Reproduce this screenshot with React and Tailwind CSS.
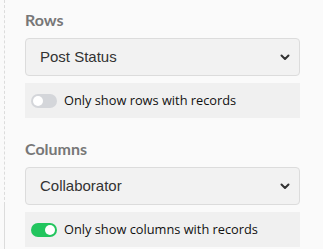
export default function App() {
  const Chevron = () => (
    <svg width="12" height="12" viewBox="0 0 12 12" className="shrink-0">
      <path d="M2.5 4.5 L6 8 L9.5 4.5" fill="none" stroke="#333" strokeWidth="2" strokeLinecap="round" strokeLinejoin="round" />
    </svg>
  );
  const Toggle = ({ on }) => (
    <div className={`w-[26px] h-[14px] rounded-full flex items-center px-[2px] ${on ? "bg-[#22c55e] justify-end" : "bg-[#d4d6da] justify-start"}`}>
      <div className="w-[10px] h-[10px] rounded-full bg-white" />
    </div>
  );
  const Section = ({ label, value, toggleText, on }) => (
    <div className="flex flex-col">
      <div className="text-[16px] leading-[20px] font-bold text-[#777] font-['Lato',sans-serif] h-[20px]">{label}</div>
      <div className="mt-[8px] h-[38px] bg-[#f2f2f2] border border-[#dcdcdc] rounded-[4px] flex items-center justify-between pl-[14px] pr-[8px] text-[15px] text-[#333] font-['Liberation_Sans',sans-serif]">
        <span>{value}</span>
        <Chevron />
      </div>
      <div className="mt-[7px] h-[35px] bg-[#f0f0f0] flex items-center gap-[7px] pl-[6px] text-[12.8px] text-[#111] font-['Open_Sans',sans-serif]">
        <Toggle on={on} />
        <span>{toggleText}</span>
      </div>
    </div>
  );
  return (
    <div className="w-[323px] h-[249px] bg-[#fafafa] flex overflow-hidden">
      <div className="w-[4px] shrink-0" />
      <div className="w-[1px] shrink-0 flex flex-col">
        <div className="h-[205px] border-l border-dashed border-[#dcdcdc]" />
        <div className="flex-1 border-l border-[#dcdcdc]" />
      </div>
      <div className="flex-1 pl-[20px] pr-[23px] pt-[10px] flex flex-col gap-[21px]">
        <Section label="Rows" value="Post Status" toggleText="Only show rows with records" on={false} />
        <Section label="Columns" value="Collaborator" toggleText="Only show columns with records" on={true} />
      </div>
    </div>
  );
}
